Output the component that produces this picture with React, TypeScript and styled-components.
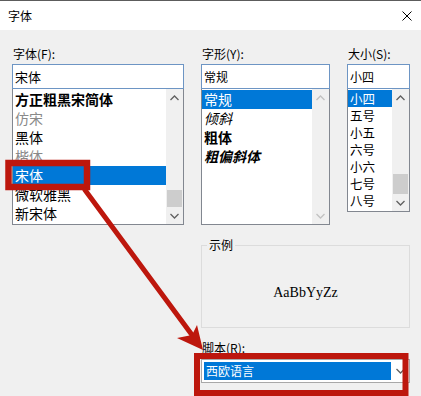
import styled, { createGlobalStyle } from 'styled-components';

const GlobalStyle = createGlobalStyle`
  html, body {
    margin: 0;
    padding: 0;
    background: #f0f0f0;
  }
  * {
    box-sizing: border-box;
  }
`;

const Window = styled.div`
  position: relative;
  width: 421px;
  height: 396px;
  overflow: hidden;
  background: #f0f0f0;
  font-family: 'Noto Sans CJK SC', 'Noto Sans', sans-serif;
  color: #000;
`;

const TitleBar = styled.div`
  height: 30px;
  border-top: 1px solid #5c5c5c;
  background: #fff;
  display: flex;
  align-items: center;
  justify-content: space-between;
  padding: 1px 8px 0 8px;
`;

const Title = styled.span`
  font-size: 12px;
  line-height: 16px;
`;

const CloseButton = styled.div`
  width: 12px;
  height: 12px;
  display: flex;
  align-items: center;
  justify-content: center;
`;

const Body = styled.div`
  padding: 16px 11px 0 12px;
`;

const Columns = styled.div`
  display: grid;
  grid-template-columns: 172px 129px 63px;
  justify-content: space-between;
  align-items: start;
`;

const Field = styled.div`
  display: flex;
  flex-direction: column;
`;

const Label = styled.div`
  font-size: 12px;
  line-height: 16px;
  height: 16px;
  padding-left: 1px;
  white-space: nowrap;
`;

const Input = styled.div<{ $size: number }>`
  margin-top: 2px;
  height: 25px;
  background: #fff;
  border: 1px solid #6d95c4;
  padding-left: 2px;
  display: flex;
  align-items: center;
  font-size: ${(p) => p.$size}px;
  white-space: nowrap;
`;

const ListBox = styled.div<{ $height: number }>`
  height: ${(p) => p.$height}px;
  background: #fff;
  border: 1px solid #828790;
  border-top: none;
  display: flex;
  overflow: hidden;
`;

const Items = styled.div`
  flex: 1;
  min-width: 0;
  display: flex;
  flex-direction: column;
  padding-top: 1px;
`;

const Item = styled.div<{
  $row: number;
  $size: number;
  $selected?: boolean;
  $bold?: boolean;
  $italic?: boolean;
  $muted?: boolean;
}>`
  height: ${(p) => p.$row}px;
  line-height: ${(p) => p.$row}px;
  font-size: ${(p) => p.$size}px;
  padding-left: 2px;
  white-space: nowrap;
  overflow: hidden;
  background: ${(p) => (p.$selected ? '#0078d7' : 'transparent')};
  color: ${(p) => (p.$selected ? '#fff' : p.$muted ? '#8a8a8a' : '#000')};
  font-weight: ${(p) => (p.$bold ? 700 : 400)};
  font-style: ${(p) => (p.$italic ? 'italic' : 'normal')};
`;

const Scrollbar = styled.div`
  width: 17px;
  flex: none;
  background: #f0f0f0;
  display: flex;
  flex-direction: column;
`;

const ScrollButton = styled.div`
  height: 17px;
  flex: none;
  display: flex;
  align-items: center;
  justify-content: center;
`;

const Track = styled.div`
  flex: 1;
  display: flex;
  flex-direction: column;
  justify-content: flex-end;
`;

const Thumb = styled.div<{ $height: number }>`
  height: ${(p) => p.$height}px;
  margin: 0 1px;
  background: #cdcdcd;
`;

const Lower = styled.div`
  margin-left: 189px;
  width: 209px;
  display: flex;
  flex-direction: column;
`;

const SampleGroup = styled.fieldset`
  margin: 12px 0 0 0;
  padding: 0;
  border: 1px solid #dcdcdc;
  min-width: 0;
`;

const Legend = styled.legend`
  margin-left: 5px;
  padding: 0 2px;
  font-size: 12px;
  line-height: 16px;
`;

const SampleText = styled.div`
  height: 74px;
  padding-top: 6px;
  display: flex;
  align-items: center;
  justify-content: center;
  font-family: 'Liberation Serif', 'DejaVu Serif', serif;
  font-size: 14px;
`;

const LowerLabel = styled(Label)`
  margin-top: 12px;
`;

const Combo = styled.div`
  margin-top: 3px;
  height: 24px;
  background: #fff;
  border: 1px solid #a8a8a8;
  display: flex;
  align-items: center;
  padding: 0 0 0 2px;
`;

const ComboValue = styled.div`
  width: 187px;
  height: 18px;
  line-height: 18px;
  background: #0078d7;
  color: #fff;
  font-size: 12px;
  padding-left: 2px;
`;

const ComboArrow = styled.div`
  flex: 1;
  display: flex;
  align-items: center;
  justify-content: center;
`;

const Overlay = styled.svg`
  position: absolute;
  left: 0;
  top: 0;
  pointer-events: none;
`;

const Chevron = ({ up, color }: { up?: boolean; color: string }) => (
  <svg width="9" height="6" viewBox="0 0 9 6">
    <polyline
      points={up ? '0.5,5 4.5,1 8.5,5' : '0.5,1 4.5,5 8.5,1'}
      fill="none"
      stroke={color}
      strokeWidth="1.3"
    />
  </svg>
);

const fonts = [
  { name: '方正粗黑宋简体', bold: true },
  { name: '仿宋', muted: true },
  { name: '黑体' },
  { name: '楷体', muted: true },
  { name: '宋体', selected: true },
  { name: '微软雅黑' },
  { name: '新宋体' },
];

const styles = [
  { name: '常规', selected: true },
  { name: '倾斜', italic: true },
  { name: '粗体', bold: true },
  { name: '粗偏斜体', bold: true, italic: true },
];

const sizes = ['小四', '五号', '小五', '六号', '小六', '七号', '八号'];

const App = () => {
  return (
    <>
      <GlobalStyle />
      <Window>
        <TitleBar>
          <Title>字体</Title>
          <CloseButton>
            <svg width="10" height="10" viewBox="0 0 10 10">
              <path d="M0.5 0.5 L9.5 9.5 M9.5 0.5 L0.5 9.5" stroke="#000" strokeWidth="1" />
            </svg>
          </CloseButton>
        </TitleBar>
        <Body>
          <Columns>
            <Field>
              <Label>字体(F):</Label>
              <Input $size={13}>宋体</Input>
              <ListBox $height={136}>
                <Items>
                  {fonts.map((f) => (
                    <Item
                      key={f.name}
                      $row={19}
                      $size={14}
                      $bold={f.bold}
                      $muted={f.muted}
                      $selected={f.selected}
                    >
                      {f.name}
                    </Item>
                  ))}
                </Items>
                <Scrollbar>
                  <ScrollButton>
                    <Chevron up color="#606060" />
                  </ScrollButton>
                  <Track>
                    <Thumb $height={17} />
                  </Track>
                  <ScrollButton>
                    <Chevron color="#606060" />
                  </ScrollButton>
                </Scrollbar>
              </ListBox>
            </Field>
            <Field>
              <Label>字形(Y):</Label>
              <Input $size={12}>常规</Input>
              <ListBox $height={136}>
                <Items>
                  {styles.map((s) => (
                    <Item
                      key={s.name}
                      $row={19}
                      $size={14}
                      $bold={s.bold}
                      $italic={s.italic}
                      $selected={s.selected}
                    >
                      {s.name}
                    </Item>
                  ))}
                </Items>
                <Scrollbar>
                  <ScrollButton>
                    <Chevron up color="#c2c2c2" />
                  </ScrollButton>
                  <Track />
                  <ScrollButton>
                    <Chevron color="#c2c2c2" />
                  </ScrollButton>
                </Scrollbar>
              </ListBox>
            </Field>
            <Field>
              <Label>大小(S):</Label>
              <Input $size={12}>小四</Input>
              <ListBox $height={123}>
                <Items>
                  {sizes.map((s, i) => (
                    <Item key={s} $row={17} $size={12.5} $selected={i === 0}>
                      {s}
                    </Item>
                  ))}
                </Items>
                <Scrollbar>
                  <ScrollButton>
                    <Chevron up color="#606060" />
                  </ScrollButton>
                  <Track>
                    <Thumb $height={20} />
                  </Track>
                  <ScrollButton>
                    <Chevron color="#606060" />
                  </ScrollButton>
                </Scrollbar>
              </ListBox>
            </Field>
          </Columns>
          <Lower>
            <SampleGroup>
              <Legend>示例</Legend>
              <SampleText>AaBbYyZz</SampleText>
            </SampleGroup>
            <LowerLabel>脚本(R):</LowerLabel>
            <Combo>
              <ComboValue>西欧语言</ComboValue>
              <ComboArrow>
                <Chevron color="#606060" />
              </ComboArrow>
            </Combo>
          </Lower>
        </Body>
        <Overlay width="421" height="396" viewBox="0 0 421 396">
          <rect x="8.5" y="163" width="78.5" height="24" fill="none" stroke="#bd170d" strokeWidth="6.5" />
          <rect x="197" y="356" width="208.5" height="37" fill="none" stroke="#bd170d" strokeWidth="6" />
          <line x1="85" y1="190" x2="195" y2="339" stroke="#bd170d" strokeWidth="5" strokeLinecap="round" />
          <polygon points="203,350 197,325 192,335 177,338" fill="#bd170d" />
        </Overlay>
      </Window>
    </>
  );
};

export default App;
